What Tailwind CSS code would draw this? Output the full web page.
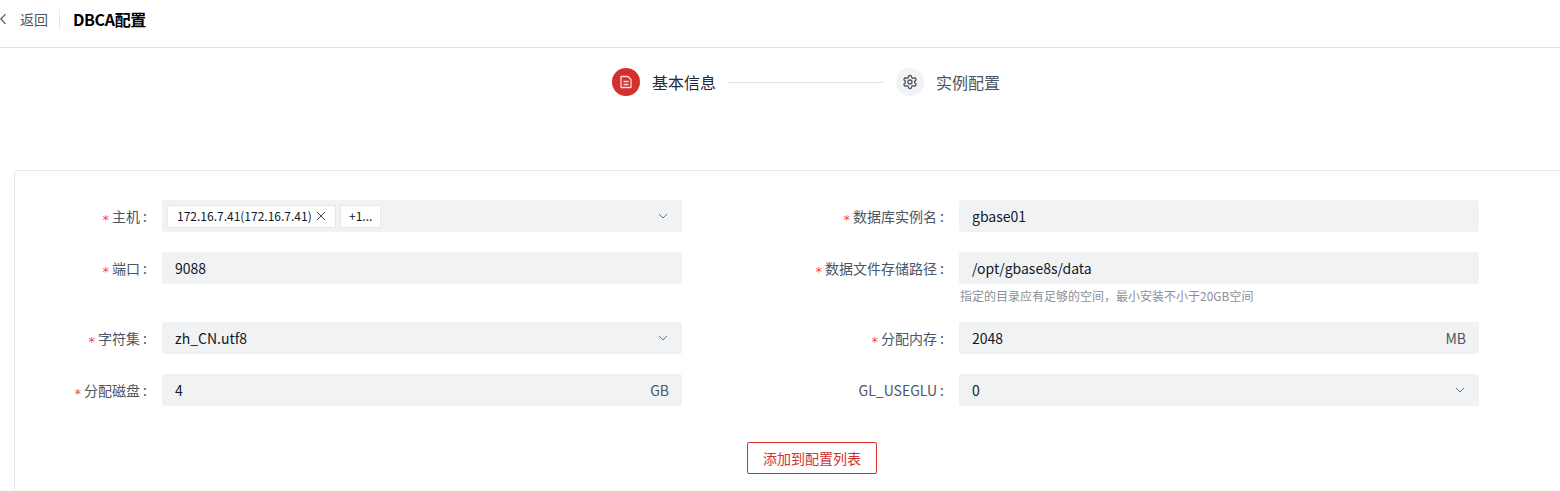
<!DOCTYPE html>
<html lang="zh-CN">
  <head>
    <meta charset="UTF-8" />
    <title>DBCA配置</title>
    <script src="https://cdn.jsdelivr.net/npm/@tailwindcss/browser@4"></script>
  </head>
  <body class="h-[491px] w-[1560px] overflow-hidden bg-white font-['Noto_Sans_CJK_SC','Noto_Sans',sans-serif] text-sm text-[#111827]">
    <!-- header -->
    <header class="flex h-12 items-center border-b border-[#dfe1e8] pb-[10px]">
      <svg class="ml-[-1px] h-3 w-[8px] text-[#4b5563]" viewBox="0 0 8 12" fill="none" stroke="currentColor" stroke-width="1.2"><path d="M6.500 1.200 1.800 6l4.700 4.800" /></svg>
      <span class="ml-[13px] leading-5 text-[#4b5563]">返回</span>
      <span class="ml-[11px] h-5 w-px bg-[#e5e7eb]"></span>
      <h1 class="ml-[13px] text-base leading-5 font-bold tracking-[-0.35px] text-black">DBCA配置</h1>
    </header>

    <!-- steps -->
    <div class="ml-[612px] flex h-[122px] w-[420px] items-start pt-5">
      <span class="flex h-7 w-7 items-center justify-center rounded-full bg-[#d32f2f]">
        <svg class="h-[14px] w-[14px] text-[#fbdcdc]" viewBox="0 0 14 14" fill="none" stroke="currentColor" stroke-width="1.300"><path d="M2 1.500h7l3 3v8H2z" stroke-linejoin="round" /><path d="M4.500 6.500h5M4.500 9.500h5" /></svg>
      </span>
      <span class="ml-3 text-base leading-7 text-[#1f2937]">基本信息</span>
      <span class="mt-[13.5px] ml-3 h-px w-[156px] bg-[#e2e4ec]"></span>
      <span class="ml-3 flex h-7 w-7 items-center justify-center rounded-full bg-[#f1f3f5]">
        <svg class="h-4 w-4 text-[#4b5563]" viewBox="0 0 24 24" fill="none" stroke="currentColor" stroke-width="2" stroke-linecap="round" stroke-linejoin="round"><path d="M12.220 2h-.44a2 2 0 0 0-2 2v.18a2 2 0 0 1-1 1.730l-.43.25a2 2 0 0 1-2 0l-.15-.08a2 2 0 0 0-2.730.73l-.22.38a2 2 0 0 0 .73 2.730l.15.1a2 2 0 0 1 1 1.720v.51a2 2 0 0 1-1 1.740l-.15.09a2 2 0 0 0-.73 2.730l.22.38a2 2 0 0 0 2.730.73l.15-.08a2 2 0 0 1 2 0l.43.25a2 2 0 0 1 1 1.730V20a2 2 0 0 0 2 2h.44a2 2 0 0 0 2-2v-.18a2 2 0 0 1 1-1.730l.43-.25a2 2 0 0 1 2 0l.15.08a2 2 0 0 0 2.730-.73l.22-.39a2 2 0 0 0-.73-2.730l-.15-.08a2 2 0 0 1-1-1.740v-.5a2 2 0 0 1 1-1.740l.15-.09a2 2 0 0 0 .73-2.730l-.22-.38a2 2 0 0 0-2.730-.73l-.15.08a2 2 0 0 1-2 0l-.43-.25a2 2 0 0 1-1-1.730V4a2 2 0 0 0-2-2z" /><circle cx="12" cy="12" r="3" /></svg>
      </span>
      <span class="ml-3 text-base leading-7 text-[#4b5563]">实例配置</span>
    </div>

    <!-- form card -->
    <section class="ml-[14px] h-[340px] w-[1600px] rounded-tl border border-[#e5e7eb] pt-[29px]">
      <div class="grid grid-cols-[797px_797px]">
        <!-- row 1 -->
        <div class="mb-5 flex items-start">
          <label class="w-[147px] pr-[15px] text-right leading-8 text-[#4b5563]"><span class="mr-[3px] inline-block translate-y-[2px] font-['DejaVu_Sans'] text-[13px] leading-none text-[#f0484a]">*</span>主机<span class="ml-[3px]">:</span></label>
          <div class="flex h-8 w-[520px] items-center rounded-[2px] bg-[#f1f2f4] pr-[14px] pl-[5px]">
            <span class="flex h-[23px] w-[169px] items-center rounded-[2px] border border-[#e5e7eb] bg-white pl-[9px] text-xs">172.16.7.41(172.16.7.41)
              <svg class="ml-[4px] h-[10px] w-[10px] text-[#374151]" viewBox="0 0 10 10" fill="none" stroke="currentColor"><path d="m1 1 8 8M9 1 1 9" /></svg>
            </span>
            <span class="ml-[4px] flex h-[23px] w-[41px] items-center rounded-[2px] border border-[#e5e7eb] bg-white pl-[8px] text-xs">+1...</span>
            <svg class="ml-auto h-[10px] w-[10px] text-[#6b7280]" viewBox="0 0 10 10" fill="none" stroke="currentColor"><path d="m1 3 4 4 4-4" /></svg>
          </div>
        </div>
        <div class="mb-5 flex items-start">
          <label class="w-[147px] pr-[15px] text-right leading-8 whitespace-nowrap text-[#4b5563]"><span class="mr-[3px] inline-block translate-y-[2px] font-['DejaVu_Sans'] text-[13px] leading-none text-[#f0484a]">*</span>数据库实例名<span class="ml-[3px]">:</span></label>
          <div class="flex h-8 w-[520px] items-center rounded-[2px] bg-[#f1f2f4] px-[13px]">gbase01</div>
        </div>
        <!-- row 2 -->
        <div class="mb-5 flex items-start">
          <label class="w-[147px] pr-[15px] text-right leading-8 text-[#4b5563]"><span class="mr-[3px] inline-block translate-y-[2px] font-['DejaVu_Sans'] text-[13px] leading-none text-[#f0484a]">*</span>端口<span class="ml-[3px]">:</span></label>
          <div class="flex h-8 w-[520px] items-center rounded-[2px] bg-[#f1f2f4] px-[13px]">9088</div>
        </div>
        <div class="mb-5 flex items-start">
          <label class="w-[147px] pr-[15px] text-right leading-8 whitespace-nowrap text-[#4b5563]"><span class="mr-[3px] inline-block translate-y-[2px] font-['DejaVu_Sans'] text-[13px] leading-none text-[#f0484a]">*</span>数据文件存储路径<span class="ml-[3px]">:</span></label>
          <div class="w-[520px]">
            <div class="flex h-8 items-center rounded-[2px] bg-[#f1f2f4] px-[13px]">/opt/gbase8s/data</div>
            <p class="h-[18px] pl-px text-xs leading-6 text-[#8c9099]">指定的目录应有足够的空间，最小安装不小于20GB空间</p>
          </div>
        </div>
        <!-- row 3 -->
        <div class="mb-5 flex items-start">
          <label class="w-[147px] pr-[15px] text-right leading-8 text-[#4b5563]"><span class="mr-[3px] inline-block translate-y-[2px] font-['DejaVu_Sans'] text-[13px] leading-none text-[#f0484a]">*</span>字符集<span class="ml-[3px]">:</span></label>
          <div class="flex h-8 w-[520px] items-center justify-between rounded-[2px] bg-[#f1f2f4] pr-[14px] pl-[13px]">zh_CN.utf8
            <svg class="h-[10px] w-[10px] text-[#6b7280]" viewBox="0 0 10 10" fill="none" stroke="currentColor"><path d="m1 3 4 4 4-4" /></svg>
          </div>
        </div>
        <div class="mb-5 flex items-start">
          <label class="w-[147px] pr-[15px] text-right leading-8 text-[#4b5563]"><span class="mr-[3px] inline-block translate-y-[2px] font-['DejaVu_Sans'] text-[13px] leading-none text-[#f0484a]">*</span>分配内存<span class="ml-[3px]">:</span></label>
          <div class="flex h-8 w-[520px] items-center justify-between rounded-[2px] bg-[#f1f2f4] px-[13px]">2048<span class="text-[#4b5563]">MB</span></div>
        </div>
        <!-- row 4 -->
        <div class="mb-9 flex items-start">
          <label class="w-[147px] pr-[15px] text-right leading-8 text-[#4b5563]"><span class="mr-[3px] inline-block translate-y-[2px] font-['DejaVu_Sans'] text-[13px] leading-none text-[#f0484a]">*</span>分配磁盘<span class="ml-[3px]">:</span></label>
          <div class="flex h-8 w-[520px] items-center justify-between rounded-[2px] bg-[#f1f2f4] px-[13px]">4<span class="text-[#4b5563]">GB</span></div>
        </div>
        <div class="mb-9 flex items-start">
          <label class="w-[147px] pr-[15px] text-right leading-8 whitespace-nowrap text-[#4b5563]">GL_USEGLU<span class="ml-[3px]">:</span></label>
          <div class="flex h-8 w-[520px] items-center justify-between rounded-[2px] bg-[#f1f2f4] pr-[14px] pl-[13px]">0
            <svg class="h-[10px] w-[10px] text-[#6b7280]" viewBox="0 0 10 10" fill="none" stroke="currentColor"><path d="m1 3 4 4 4-4" /></svg>
          </div>
        </div>
      </div>
      <button class="ml-[732px] h-8 w-[130px] rounded-[2px] border border-[#d32f2f] bg-white text-[#d32f2f]">添加到配置列表</button>
    </section>
  </body>
</html>
